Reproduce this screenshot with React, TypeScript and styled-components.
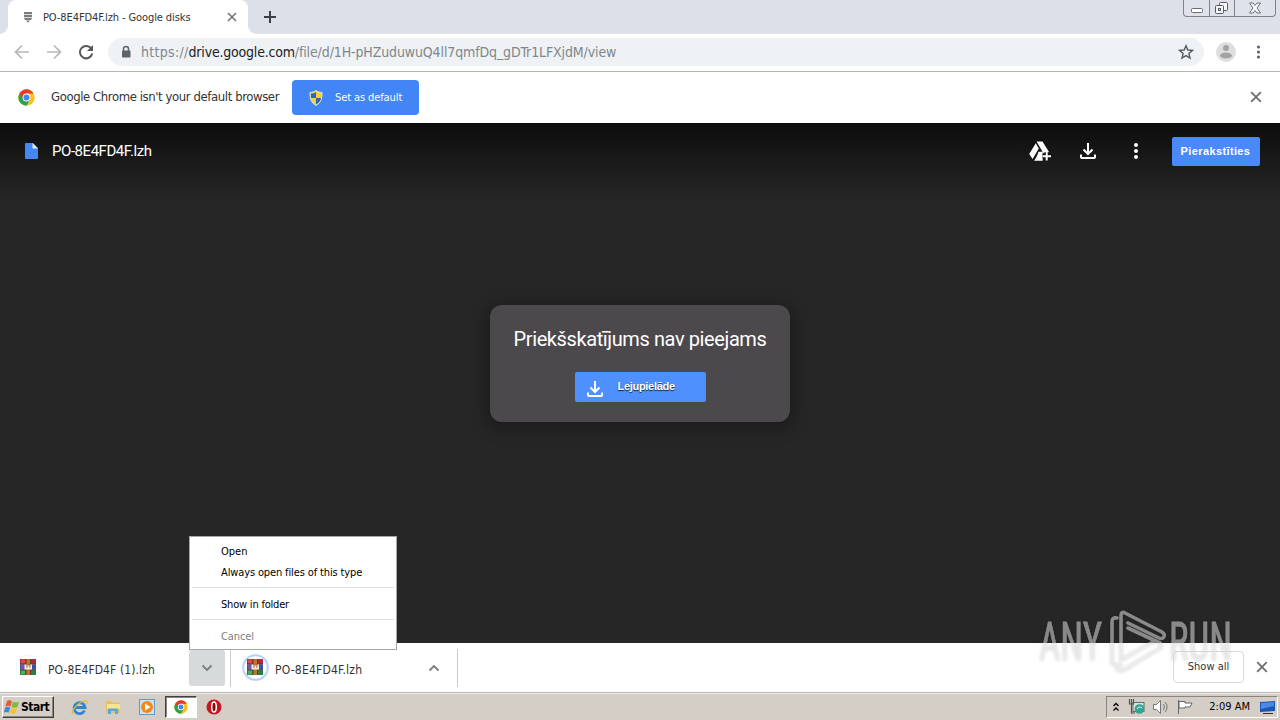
import React from "react";
import styled, { createGlobalStyle } from "styled-components";

const Global = createGlobalStyle`
  *{box-sizing:border-box}
  body{margin:0;overflow:hidden;background:#262626}
`;
const ui = `"DejaVu Sans Condensed","DejaVu Sans",Tahoma,sans-serif`;

const Screen = styled.div`
  width:1280px;height:720px;display:flex;flex-direction:column;position:relative;
  overflow:hidden;font-family:${ui};font-stretch:condensed;color:#333;
`;
const Label = styled.span<{ $size?: number; $ls?: number; $color?: string }>`
  font-size:${p => p.$size ?? 11}px;letter-spacing:${p => p.$ls ?? 0}px;
  color:${p => p.$color ?? "#333"};white-space:pre;line-height:16px;
`;

const TabStrip = styled.header`
  height:34px;flex:none;background:#dde0e9;display:flex;justify-content:space-between;padding-left:8px;
`;
const TabArea = styled.div`display:flex;align-items:center;`;
const Tab = styled.div`
  width:240px;height:34px;background:#fff;border-radius:8px 8px 0 0;display:flex;align-items:center;
  padding:0 11px 0 15px;gap:10px;position:relative;
  &::before,&::after{content:"";position:absolute;bottom:0;width:8px;height:8px;}
  &::before{left:-8px;background:radial-gradient(circle at 0 0,transparent 7.5px,#fff 8px)}
  &::after{right:-8px;background:radial-gradient(circle at 100% 0,transparent 7.5px,#fff 8px)}
`;
const TabTitle = styled.div`flex:1;display:flex;padding-top:1px;`;
const NewTab = styled.div`margin-left:15px;display:flex;`;
const WindowButtons = styled.div`
  width:93px;height:17px;margin-right:4px;border:1px solid #7d828d;border-top:0;border-radius:0 0 4px 4px;
  display:grid;grid-template-columns:25px 25px 1fr;background:#dfe2ea;
`;
const WindowButton = styled.div`
  display:flex;justify-content:center;align-items:center;
  & + &{border-left:1px solid #7d828d}
`;

const Toolbar = styled.div`
  height:38px;flex:none;background:#fff;border-bottom:1px solid #b4b6b4;display:flex;align-items:center;
  padding:0 0 1px 13px;
`;
const NavIcons = styled.div`display:flex;width:95px;flex:none;gap:14px;align-items:center;`;
const Omnibox = styled.div`
  height:28px;width:1096px;flex:none;border-radius:14px;background:#eff2f5;display:flex;align-items:center;
  padding:0 10px 0 12px;gap:9px;
`;
const Url = styled.div`flex:1;display:flex;padding-bottom:1px;`;
const ToolbarEnd = styled.div`display:flex;align-items:center;gap:15px;margin-left:12px;flex:none;`;

const InfoBar = styled.div`
  height:51px;flex:none;background:#fff;display:flex;align-items:center;padding:0 18px;
`;
const InfoText = styled.div`width:241px;margin-left:16px;display:flex;padding-bottom:1px;`;
const DefaultButton = styled.div`
  width:127px;height:35px;border-radius:4px;background:#4285f4;display:flex;align-items:center;
  padding-left:17px;gap:12px;
`;
const PushRight = styled.div`margin-left:auto;display:flex;padding-bottom:1px;`;

const Viewer = styled.main`
  height:520px;flex:none;background:linear-gradient(#0c0c0c 0,#1a1a1a 38px,#262626 76px);
  display:flex;flex-direction:column;align-items:center;
`;
const ViewerBar = styled.div`
  width:100%;height:56px;display:flex;align-items:center;padding:0 20px 0 25px;
`;
const FileName = styled.div`
  font:15px/20px Roboto,sans-serif;letter-spacing:-.45px;color:#fff;margin-left:14px;
`;
const ViewerActions = styled.div`margin-left:auto;display:flex;align-items:center;gap:24px;`;
const SignIn = styled.div`
  width:88px;height:29px;border-radius:2px;background:#4a8af8;color:#fff;
  font:bold 11px/28px "Liberation Sans",sans-serif;text-align:center;letter-spacing:.38px;padding-right:1px;
`;
const Preview = styled.section`
  width:300px;height:117px;margin-top:126px;border-radius:12px;background:#4c494c;
  box-shadow:0 4px 16px 4px rgba(0,0,0,.28);display:flex;flex-direction:column;align-items:center;padding-top:20px;
`;
const PreviewTitle = styled.div`font:20px/28px Roboto,sans-serif;color:#fff;letter-spacing:-.4px;white-space:nowrap;`;
const Download = styled.div`
  width:131px;height:30px;margin-top:19px;border-radius:2px;background:#4d90fe;display:flex;align-items:flex-end;
  padding-left:8px;gap:11px;
`;
const DownloadGlyph = styled.div`display:flex;padding-bottom:1px;`;
const DownloadText = styled.span`
  font:bold 11px/28px "Liberation Sans",sans-serif;letter-spacing:-.3px;color:#fff;text-shadow:0 1px 1px #123;
  padding-bottom:2px;
`;

const Shelf = styled.footer`
  height:49px;flex:none;background:#fff;display:flex;align-items:center;padding:0 12px 0 15px;
`;
const ShelfItem = styled.div<{ $width: number; $indent?: number }>`
  width:${p => p.$width}px;height:38px;display:flex;align-items:center;gap:6px;
  border-right:1px solid #c9caca;padding-right:5px;padding-left:${p => p.$indent ?? 0}px;
`;
const ShelfName = styled.div`display:flex;padding-top:4px;`;
const Caret = styled.div<{ $active?: boolean }>`
  width:36px;height:36px;margin-left:auto;border-radius:3px;background:${p => p.$active ? "#d7dada" : "none"};
  display:flex;align-items:center;justify-content:center;
`;
const ShelfEnd = styled.div`margin-left:auto;display:flex;align-items:center;gap:12px;padding-bottom:1px;`;
const ShowAll = styled.div`
  width:71px;height:32px;border:1px solid #d8d9db;border-radius:4px;display:flex;align-items:center;justify-content:center;
`;

const Taskbar = styled.div`
  height:28px;flex:none;background:#d5cec6;border-top:1px solid #b9b8b5;box-shadow:inset 0 1px #f0eeea;
  display:flex;align-items:center;padding:1px 2px 0 2px;
`;
const Start = styled.div`
  width:52px;height:22px;border:1px solid;border-color:#fff #404040 #404040 #fff;box-shadow:inset -1px -1px #8a867f;
  display:flex;align-items:center;gap:1px;padding-left:1px;
`;
const StartText = styled.span`font:bold 12px/18px ${ui};font-stretch:condensed;color:#000;letter-spacing:-.5px;`;
const QuickLaunch = styled.div`display:flex;align-items:center;margin-left:9px;`;
const Quick = styled.div<{ $active?: boolean }>`
  width:${p => p.$active ? 32 : 33.5}px;height:22px;display:flex;align-items:center;justify-content:center;
  ${p => p.$active && "background:#fff;border:1px solid;border-color:#404040 #fff #fff #404040;box-shadow:inset 1px 1px #8a867f;margin:0 1px;"}
`;
const Tray = styled.div`
  width:172px;height:22px;margin-left:auto;border:1px solid;border-color:#8a867f #fff #fff #8a867f;
  display:flex;align-items:center;justify-content:space-between;padding:0 1px 0 5px;
`;
const TrayIcons = styled.div`display:flex;align-items:center;gap:7.5px;`;
const Clock = styled.div`display:flex;align-items:center;gap:9px;`;

const Menu = styled.div`
  position:absolute;left:189px;top:536px;width:208px;height:114px;background:#fff;border:1px solid #a6a6a6;
  padding-top:4px;display:flex;flex-direction:column;
`;
const MenuItem = styled.div`height:21px;padding:3px 0 0 31px;display:flex;flex:none;`;
const Divider = styled.div`height:1px;margin:4px 2px 6px;background:#dedede;flex:none;`;
const Watermark = styled.svg`
  position:absolute;left:1030px;top:604px;filter:drop-shadow(0 0 1.5px rgba(0,0,0,.28));
`;

const Cross = ({ s = 10, c = "#6b6f73" }: { s?: number; c?: string }) => (
  <svg width={s} height={s} viewBox="0 0 10 10"><path d="M1 1l8 8M9 1L1 9" stroke={c} strokeWidth="1.500" /></svg>
);
const Chrome = ({ s }: { s: number }) => (
  <svg width={s} height={s} viewBox="0 0 48 48">
    <circle cx="24" cy="24" r="23" fill="#fbc116" />
    <path d="M24 24L4.1 12.5A23 23 0 0 0 24 47l10-17.3z" fill="#2ba24c" />
    <path d="M24 24H13.6L4.1 12.5a23 23 0 0 1 39.8 0V13H24z" fill="#e33b2e" />
    <circle cx="24" cy="24" r="11" fill="#fff" /><circle cx="24" cy="24" r="8.5" fill="#4285f4" />
  </svg>
);
const DownloadIcon = () => (
  <svg width="24" height="24" viewBox="0 0 24 24" fill="none" stroke="#fff" strokeWidth="2">
    <path d="M12 4v10.5M7.5 10.5L12 15l4.500-4.500M5 15.500V18a1 1 0 0 0 1 1h12a1 1 0 0 0 1-1v-2.500" />
  </svg>
);
const Kebab = ({ c, r, h }: { c: string; r: number; h: number }) => (
  <svg width="24" height="24" viewBox="0 0 24 24" fill={c}>
    <circle cx="12" cy={12 - h} r={r} /><circle cx="12" cy="12" r={r} /><circle cx="12" cy={12 + h} r={r} />
  </svg>
);
const Rar = ({ ring }: { ring?: boolean }) => (
  <svg width="27" height="27" viewBox="0 0 27 27">
    <circle cx="13.500" cy="13.500" r="12.300" fill="none" stroke={ring ? "#b3d1fb" : "#f1f5fa"} strokeWidth={ring ? 2 : 1} />
    <path d="M5 5h16v5H5z" fill="#b5283c" /><path d="M6 5.500h4v4H6z" fill="#dd4f3a" />
    <path d="M5 10.500h16v5H5z" fill="#3d4fa8" /><path d="M6 11h4v4H6z" fill="#7a52a8" />
    <path d="M5 16h16v5H5z" fill="#278040" /><path d="M6 16.500h4v4H6z" fill="#4fae55" />
    <path d="M5 10.200h16M5 15.700h16" stroke="#3b2130" strokeWidth=".8" />
    <path d="M11 5h4.500v16H11z" fill="#b87532" /><path d="M10.500 5h1v16h-1zM15 5h1v16h-1z" fill="#6d3c26" />
    <path d="M9.500 10.500v5h7.500v-5h-1.700v3.200h-1V11.500h-1.800v2.200h-1v-3.200z" fill="#f5eee0" />
  </svg>
);
const Chevron = ({ up }: { up?: boolean }) => (
  <svg width="12" height="8" viewBox="0 0 12 8"><path d={up ? "M1.500 6.500L6 2l4.500 4.500" : "M1.500 1.500L6 6l4.500-4.500"} fill="none" stroke="#7a7e82" strokeWidth="1.8" /></svg>
);

export default function App() {
  return (
    <Screen>
      <Global />
      <TabStrip>
        <TabArea>
          <Tab>
            <svg width="10" height="12" viewBox="0 0 10 12" fill="#7c7c7c"><path d="M1 1h8v2.300H1zM1 4h8v2.300H1zM1 7h8l-1 2H2zM3 9.500h4l-2 2.200z" /></svg>
            <TabTitle><Label $ls={-0.1}>PO-8E4FD4F.lzh - Google disks</Label></TabTitle>
            <Cross s={10} />
          </Tab>
          <NewTab><svg width="14" height="14" viewBox="0 0 14 14"><path d="M7 1v12M1 7h12" stroke="#3c4043" strokeWidth="2" /></svg></NewTab>
        </TabArea>
        <WindowButtons>
          <WindowButton><svg width="12" height="12" viewBox="0 0 12 12"><rect x=".5" y="6.500" width="11" height="4" rx="1" fill="#fff" stroke="#676c76" /></svg></WindowButton>
          <WindowButton><svg width="14" height="14" viewBox="0 0 14 14" fill="#f4f5f8" stroke="#555a64"><rect x="4.500" y="1.500" width="8" height="8" rx="1" /><rect x=".5" y="4.500" width="8" height="8" rx="1" /><rect x="3.500" y="7.500" width="2" height="2" /></svg></WindowButton>
          <WindowButton><svg width="14" height="12" viewBox="0 0 14 12"><path d="M1.500 1h3.500l2 2.500L9 1h3.500L9 6l3.500 5H9L7 8.500 5 11H1.500L5 6z" fill="#fff" stroke="#676c76" /></svg></WindowButton>
        </WindowButtons>
      </TabStrip>

      <Toolbar>
        <NavIcons>
          <svg width="18" height="16" viewBox="0 0 18 16" fill="none" stroke="#b5b7ba" strokeWidth="1.700"><path d="M16 8H3M9 1.500L2.500 8 9 14.500" /></svg>
          <svg width="18" height="16" viewBox="0 0 18 16" fill="none" stroke="#b5b7ba" strokeWidth="1.700"><path d="M2 8h13M9 1.500L15.500 8 9 14.500" /></svg>
          <svg width="18" height="18" viewBox="0 0 18 18"><path d="M14.500 6A6.200 6.200 0 1 0 15.200 10.500" fill="none" stroke="#55585c" strokeWidth="2" /><path d="M16 2v6h-6z" fill="#55585c" /></svg>
        </NavIcons>
        <Omnibox>
          <svg width="12" height="14" viewBox="0 0 12 14"><path d="M3.500 6V4a2.500 2.500 0 0 1 5 0v2" fill="none" stroke="#5f6368" strokeWidth="1.500" /><rect x="2" y="5.500" width="8.500" height="7" rx="1" fill="#5f6368" /></svg>
          <Url>
            <Label $size={14} $ls={0.3} $color="#80868b">https://</Label>
            <Label $size={14} $ls={-0.2} $color="#202124">drive.google.com</Label>
            <Label $size={14} $ls={-0.12} $color="#80868b">/file/d/1H-pHZuduwuQ4ll7qmfDq_gDTr1LFXjdM/view</Label>
          </Url>
          <svg width="16" height="16" viewBox="0 0 16 16"><path d="M8 1.800l1.800 4.200 4.700.4-3.600 3 1.100 4.600L8 11.600 4 14l1.100-4.600-3.600-3 4.700-.4z" fill="none" stroke="#55595e" strokeWidth="1.400" /></svg>
        </Omnibox>
        <ToolbarEnd>
          <svg width="20" height="20" viewBox="0 0 20 20"><circle cx="10" cy="10" r="10" fill="#dedede" /><circle cx="10" cy="6" r="3" fill="#a2a3a4" /><ellipse cx="10" cy="13.500" rx="6" ry="3" fill="#a2a3a4" /></svg>
          <svg width="18" height="18" viewBox="0 0 18 18" fill="#5f6368"><circle cx="7.500" cy="4" r="1.600" /><circle cx="7.500" cy="9" r="1.600" /><circle cx="7.500" cy="14" r="1.600" /></svg>
        </ToolbarEnd>
      </Toolbar>

      <InfoBar>
        <Chrome s={17} />
        <InfoText><Label $size={13} $ls={-0.41}>Google Chrome isn't your default browser</Label></InfoText>
        <DefaultButton>
          <svg width="14" height="16" viewBox="0 0 14 16"><path d="M7 .5c2 1.500 4 2 6 2C13 9 12 12.500 7 15.500 2 12.500 1 9 1 2.500c2 0 4-.5 6-2z" fill="#f6cf3b" stroke="#dcebd9" /><path d="M7 2v6H2C2 6 1.800 5 2 3.500 4 3.500 5.500 3 7 2zM7 8h5c-.5 3-2 5-5 6.500z" fill="#2867bd" /></svg>
          <Label $color="#fff" $ls={-0.1}>Set as default</Label>
        </DefaultButton>
        <PushRight><Cross s={12} /></PushRight>
      </InfoBar>

      <Viewer>
        <ViewerBar>
          <svg width="13" height="16" viewBox="0 0 13 16"><path d="M1 0h7l5 5v10a1 1 0 0 1-1 1H1a1 1 0 0 1-1-1V1a1 1 0 0 1 1-1z" fill="#4486f4" /><path d="M7.500 0L13 5.500H7.500z" fill="#e2ecfd" /></svg>
          <FileName>PO-8E4FD4F.lzh</FileName>
          <ViewerActions>
            <svg width="24" height="24" viewBox="0 0 24 24" fill="#fff"><path d="M8.500 2.500h6l6.800 11h-3l-3 .5L8.500 2.500zM7.800 4.200l3 5.300L4.600 20 1.200 15zM10.500 12.800l4.200 0v4.200l0 4.700H6.200l3-5.300z" /><path d="M18.700 13v8.500M14.500 17.300H23" stroke="#111" strokeWidth="4" /><path d="M18.700 13v8.500M14.500 17.300H23" stroke="#fff" strokeWidth="2" /></svg>
            <DownloadIcon />
            <Kebab c="#fff" r={2} h={6} />
            <SignIn>Pierakstīties</SignIn>
          </ViewerActions>
        </ViewerBar>
        <Preview>
          <PreviewTitle>Priekšskatījums nav pieejams</PreviewTitle>
          <Download><DownloadGlyph><DownloadIcon /></DownloadGlyph><DownloadText>Lejupielāde</DownloadText></Download>
        </Preview>
      </Viewer>

      <Shelf>
        <ShelfItem $width={216}>
          <Rar /><ShelfName><Label $size={12} $ls={0.1}>PO-8E4FD4F (1).lzh</Label></ShelfName><Caret $active><Chevron /></Caret>
        </ShelfItem>
        <ShelfItem $width={227} $indent={11}>
          <Rar ring /><ShelfName><Label $size={12} $ls={0.2}>PO-8E4FD4F.lzh</Label></ShelfName><Caret><Chevron up /></Caret>
        </ShelfItem>
        <ShelfEnd><ShowAll><Label>Show all</Label></ShowAll><Cross s={12} /></ShelfEnd>
      </Shelf>

      <Taskbar>
        <Start>
          <svg width="16" height="16" viewBox="0 0 16 16"><path d="M3 2c2-1 3-1 5 .2L6.500 7.500C5 6.500 3.500 6.500 1.500 7.500z" fill="#e7592c" /><path d="M9 2.700c2 1 3.500 1 6 0L13.500 8c-2 1-4 1-6 0z" fill="#7fba3c" /><path d="M1.200 8.500c2-1 3.500-1 5 0L4.700 13.700c-1.500-1-3-1-5 0z" fill="#3b8ade" /><path d="M7.200 9c2 1 4 1 6 0l-1.500 5c-2 1-4 1-6 0z" fill="#f6c330" /></svg>
          <StartText>Start</StartText>
        </Start>
        <QuickLaunch>
          <Quick><svg width="17" height="17" viewBox="0 0 17 17" fill="none"><path d="M13.500 11.500A5.500 5.500 0 1 1 14 8.500H4.500" stroke="#2b86d3" strokeWidth="2.800" /><path d="M2 15C-2 13 9 1 15.500 2c1 .5.500 2 0 3" stroke="#e9b73a" strokeWidth="1.300" /></svg></Quick>
          <Quick><svg width="16" height="16" viewBox="0 0 16 16"><path d="M1 2h5l1 1.500h8V14H1z" fill="#e6c260" /><path d="M2 5h13v5H2z" fill="#f8e594" /><path d="M3 15v-5.500h10V15h-3v-3H6v3z" fill="#58a8da" /></svg></Quick>
          <Quick><svg width="16" height="16" viewBox="0 0 16 16"><rect x=".5" y=".5" width="15" height="15" fill="#cfe1f2" stroke="#5d9bd0" /><circle cx="8" cy="8" r="6" fill="#f08a1d" /><path d="M6 4.500L11.500 8 6 11.500z" fill="#fff" /></svg></Quick>
          <Quick $active><Chrome s={14} /></Quick>
          <Quick><svg width="16" height="16" viewBox="0 0 16 16"><circle cx="8" cy="8" r="7.500" fill="#c21820" /><ellipse cx="8" cy="8" rx="2.300" ry="5" fill="#8d0c12" stroke="#fff" strokeWidth="1.500" /></svg></Quick>
        </QuickLaunch>
        <Tray>
          <TrayIcons>
            <svg width="8" height="10" viewBox="0 0 8 10" fill="none" stroke="#000" strokeWidth="1.300"><path d="M1.500 4L4 1.500 6.500 4M1.500 8.500L4 6l2.500 2.500" /></svg>
            <svg width="17" height="16" viewBox="0 0 17 16"><rect x="5" y="3.500" width="11" height="9" fill="#d7e3e2" stroke="#56706d" /><path d="M1.500 0v5h4V0M3.500 0v14H7" fill="none" stroke="#555" strokeWidth="1.200" /><circle cx="11.500" cy="10" r="4.800" fill="#38a392" /><path d="M9 10a3 3 0 0 1 5-1" fill="none" stroke="#d9f5ef" /></svg>
            <svg width="17" height="16" viewBox="0 0 17 16" fill="none" stroke="#777"><path d="M1.500 5.500h3l4-4v13l-4-4h-3z" fill="#fff" /><path d="M11 5a4 4 0 0 1 0 6M13 3a7 7 0 0 1 0 10" /></svg>
            <svg width="16" height="16" viewBox="0 0 16 16" fill="#fff" stroke="#666"><path d="M1.500 1v14M2 2.500h6v1.500h7l-2 4H8V9H2z" /></svg>
          </TrayIcons>
          <Clock>
            <Label $color="#000">2:09 AM</Label>
            <svg width="17" height="15" viewBox="0 0 17 15"><path d="M1 2l15-1v10L1 12z" fill="#1c55b8" /><path d="M2 3l13-1v4L2 9z" fill="#4c8ae2" /><path d="M4 13h10v1H4z" fill="#333" /></svg>
          </Clock>
        </Tray>
      </Taskbar>

      <Menu>
        <MenuItem><Label $color="#000">Open</Label></MenuItem>
        <MenuItem><Label $color="#000" $ls={-0.13}>Always open files of this type</Label></MenuItem>
        <Divider />
        <MenuItem><Label $color="#000" $ls={-0.2}>Show in folder</Label></MenuItem>
        <Divider />
        <MenuItem><Label $color="#808080" $ls={-0.1}>Cancel</Label></MenuItem>
      </Menu>

      <Watermark width="210" height="76" viewBox="0 0 210 76">
        <g fill="none" stroke="#f2f2f2" strokeOpacity=".5" strokeWidth="3.600" strokeLinejoin="round" strokeLinecap="round">
          <path d="M87 14q-5-1-5 4V57q0 4 4 4h5M91 56V12q0-5 4-3L132 28q4 3 1 6-2 1-4 0L98 19M98 24l32 15q3 2 0 5L94 66q-4 2-7-1M91 56l32-18" />
        </g>
        <g fill="#f2f2f2" stroke="#f2f2f2" strokeWidth=".8" opacity=".5" fontFamily="Roboto,sans-serif" fontSize="53">
          <text x="9" y="55.500" textLength="63" lengthAdjust="spacingAndGlyphs">ANY</text>
          <text x="139" y="55.500" textLength="63" lengthAdjust="spacingAndGlyphs">RUN</text>
        </g>
      </Watermark>
    </Screen>
  );
}
